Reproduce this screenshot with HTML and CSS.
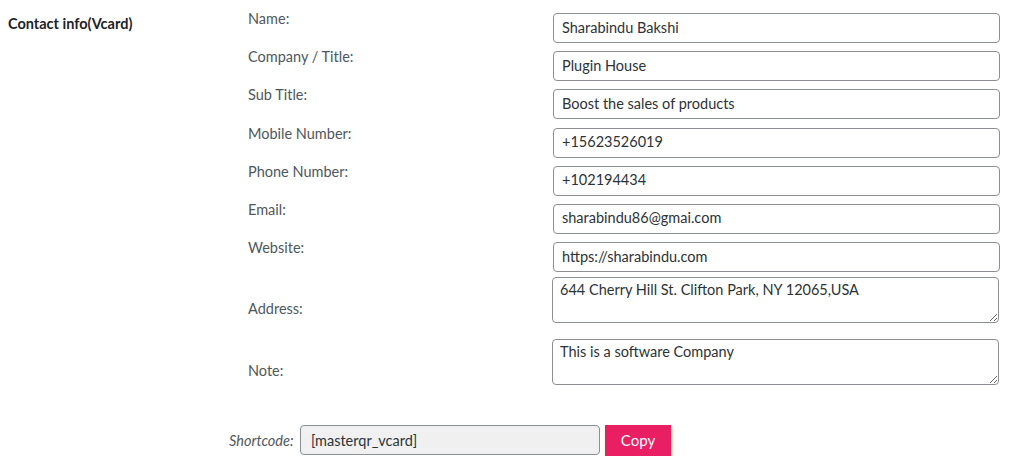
FILE: index.html
```html
<!DOCTYPE html>
<html>
<head>
<meta charset="utf-8">
<link rel="stylesheet" href="styles.css">
</head>
<body>
<div class="section">
  <div class="section-title">Contact info(Vcard)</div>
  <div class="section-body">
    <div class="fields">
      <div class="row"><label class="lbl">Name:</label><input class="inp" type="text" value="Sharabindu Bakshi"></div>
      <div class="row"><label class="lbl">Company / Title:</label><input class="inp" type="text" value="Plugin House"></div>
      <div class="row"><label class="lbl">Sub Title:</label><input class="inp" type="text" value="Boost the sales of products"></div>
      <div class="row"><label class="lbl">Mobile Number:</label><input class="inp" type="text" value="+15623526019"></div>
      <div class="row"><label class="lbl">Phone Number:</label><input class="inp" type="text" value="+102194434"></div>
      <div class="row"><label class="lbl">Email:</label><input class="inp" type="text" value="sharabindu86@gmai.com"></div>
      <div class="row"><label class="lbl">Website:</label><input class="inp" type="text" value="https://sharabindu.com"></div>
      <div class="row row-area first-area"><label class="lbl lbl-area">Address:</label><textarea class="area">644 Cherry Hill St. Clifton Park, NY 12065,USA</textarea></div>
      <div class="row row-area"><label class="lbl lbl-area">Note:</label><textarea class="area">This is a software Company</textarea></div>
    </div>
    <div class="shortcode">
      <span class="sc-label">Shortcode:</span>
      <input class="sc-input" type="text" value="[masterqr_vcard]" readonly>
      <button class="copy-btn">Copy</button>
    </div>
  </div>
</div>
</body>
</html>
```

FILE: styles.css
```css
html, body {
  margin: 0;
  padding: 0;
  background: #ffffff;
}
body {
  font-family: Lato, "Open Sans", Arial, sans-serif;
  font-size: 14.5px;
  color: #3c434a;
}
.section {
  display: flex;
  align-items: flex-start;
}
.section-title {
  width: 240px;
  flex: none;
  box-sizing: border-box;
  padding: 15px 0 0 8px;
  font-weight: bold;
  font-size: 14.5px;
  color: #1d2327;
}
.section-body {
  flex: none;
}
.fields {
  padding-top: 13px;
  display: flex;
  flex-direction: column;
  gap: 8.2px;
}
.row {
  display: flex;
  align-items: flex-start;
}
.lbl {
  width: 313px;
  flex: none;
  box-sizing: border-box;
  padding-left: 8px;
  margin-top: -3px;
  line-height: 18px;
  color: #50575e;
  font-size: 14.5px;
}
.inp {
  box-sizing: border-box;
  width: 447px;
  height: 30px;
  margin: 0;
  padding: 0 8px 2px;
  border: 1px solid #8c8f94;
  border-radius: 4px;
  font-family: inherit;
  font-size: 14.5px;
  color: #2c3338;
  background: #fff;
}
.row-area {
  align-items: flex-end;
}
.first-area {
  margin-top: -3px;
}
.row-area + .row-area {
  margin-top: 7px;
}
.lbl-area {
  margin-top: 0;
  margin-bottom: 5px;
  width: 312px;
}
.area {
  box-sizing: border-box;
  width: 447px;
  height: 46px;
  margin: 0;
  padding: 3px 7px;
  border: 1px solid #8c8f94;
  border-radius: 4px;
  font-family: inherit;
  font-size: 14.5px;
  line-height: 18px;
  color: #2c3338;
  resize: vertical;
  display: block;
}
.shortcode {
  display: flex;
  align-items: center;
  margin-top: 40px;
  margin-left: -11px;
}
.sc-label {
  width: 71px;
  flex: none;
  font-style: italic;
  color: #50575e;
}
.sc-input {
  box-sizing: border-box;
  width: 300px;
  height: 30px;
  margin: 0;
  padding: 0 10px;
  border: 1px solid #8c8f94;
  border-radius: 4px;
  background: #f0f0f1;
  font-family: inherit;
  font-size: 14.5px;
  color: #2c3338;
}
.copy-btn {
  margin-left: 5px;
  width: 66px;
  height: 31px;
  border: none;
  border-radius: 0;
  background: #e91e63;
  color: #fff;
  font-family: inherit;
  font-size: 15px;
  box-shadow: 1px 2px 3px rgba(170, 200, 80, 0.8);
  cursor: pointer;
}
```
